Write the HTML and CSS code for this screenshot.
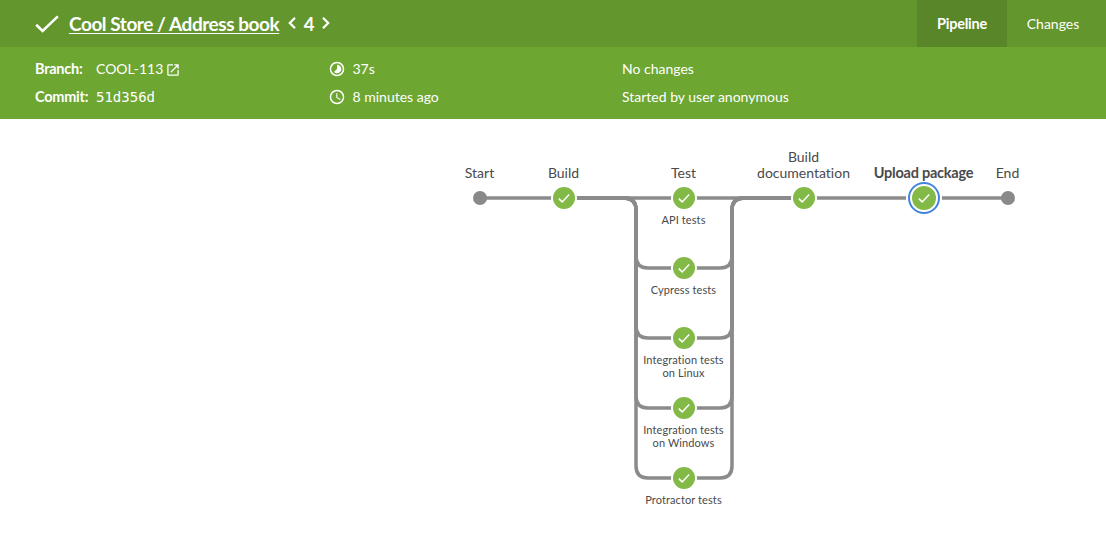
FILE: index.html
```html
<!DOCTYPE html>
<html lang="en">
<head>
<meta charset="utf-8">
<title>Cool Store / Address book 4</title>
<link rel="stylesheet" href="styles.css">
</head>
<body>
<header class="topbar">
  <svg class="status" width="24" height="18" viewBox="0 0 24 18"><path d="M1.2 9.8 7.6 16 22.800 1.4"/></svg>
  <h1 class="title"><a class="title-link" href="#">Cool Store / Address book</a></h1>
  <svg class="chevron prev" width="8" height="12" viewBox="0 0 8 12"><path d="M7 .8 1.800 6 7 11.200"/></svg>
  <span class="run">4</span>
  <svg class="chevron next" width="8" height="12" viewBox="0 0 8 12"><path d="M1 .8 6.200 6 1 11.200"/></svg>
  <nav class="tabs">
    <a class="tab selected" href="#">Pipeline</a>
    <a class="tab changes" href="#">Changes</a>
  </nav>
</header>
<section class="details">
  <div class="col refs">
    <div class="row"><b class="label">Branch:</b><span class="branch">COOL-113</span>
      <svg class="open" width="14" height="14" viewBox="1 1 22 22"><path d="M19 19H5V5h7V3H5a2 2 0 0 0-2 2v14a2 2 0 0 0 2 2h14c1.100 0 2-.9 2-2v-7h-2v7zM14 3v2h3.600l-9.800 9.800 1.400 1.400L19 6.400V10h2V3h-7z"/></svg></div>
    <div class="row"><b class="label">Commit:</b><span class="commit">51d356d</span></div>
  </div>
  <div class="col times">
    <div class="row"><svg class="icon" width="16" height="16" viewBox="1 1 22 22"><path d="M16.240 7.760A5.970 5.970 0 0 0 12 6v6l-4.240 4.240c2.340 2.340 6.140 2.340 8.490 0a5.990 5.990 0 0 0-.010-8.480zM12 2a10 10 0 1 0 0 20 10 10 0 0 0 0-20zm0 18a8 8 0 1 1 0-16 8 8 0 0 1 0 16z"/></svg><span>37s</span></div>
    <div class="row"><svg class="icon" width="16" height="16" viewBox="1 1 22 22"><path d="M12 2a10 10 0 1 0 0 20 10 10 0 0 0 0-20zm0 18a8 8 0 1 1 0-16 8 8 0 0 1 0 16zm.500-13H11v6l5.250 3.150.750-1.230-4.500-2.670z"/></svg><span>8 minutes ago</span></div>
  </div>
  <div class="col causes">
    <div class="row">No changes</div>
    <div class="row">Started by user anonymous</div>
  </div>
</section>
<main>
<svg class="graph" width="1106" height="424" viewBox="0 119 1106 424">
  <defs>
    <g id="node"><circle class="halo" r="13"/><circle class="success" r="11"/><path class="tick" d="M-5.200 .6-1.800 3.900 5.200-3.500"/></g>
  </defs>
  <g class="links">
    <path d="M480 198H1008"/>
    <path d="M564 198H624Q636 198 636 210V256Q636 268 648 268H720Q732 268 732 256V210Q732 198 744 198H804"/>
    <path d="M564 198H624Q636 198 636 210V326Q636 338 648 338H720Q732 338 732 326V210Q732 198 744 198H804"/>
    <path d="M564 198H624Q636 198 636 210V396Q636 408 648 408H720Q732 408 732 396V210Q732 198 744 198H804"/>
    <path d="M564 198H624Q636 198 636 210V466Q636 478 648 478H720Q732 478 732 466V210Q732 198 744 198H804"/>
  </g>
  <circle class="end" cx="480" cy="198" r="7"/>
  <circle class="end" cx="1008" cy="198" r="7"/>
  <use href="#node" x="564" y="198"/>
  <use href="#node" x="684" y="198"/>
  <use href="#node" x="684" y="268"/>
  <use href="#node" x="684" y="338"/>
  <use href="#node" x="684" y="408"/>
  <use href="#node" x="684" y="478"/>
  <use href="#node" x="804" y="198"/>
  <circle class="halo" cx="924" cy="198" r="18"/>
  <circle class="ring" cx="924" cy="198" r="15"/>
  <circle class="success" cx="924" cy="198" r="12"/>
  <path class="tick" d="M918.800 198.600 922.200 201.900 929.200 194.500"/>
  <g class="stage">
    <text x="479.500" y="178">Start</text>
    <text x="563.500" y="178">Build</text>
    <text x="683.500" y="178">Test</text>
    <text x="803.500" y="162">Build</text>
    <text x="803.500" y="178">documentation</text>
    <text class="current" x="923.500" y="178">Upload package</text>
    <text x="1007.500" y="178">End</text>
  </g>
  <g class="branch-name">
    <text x="683.500" y="224">API tests</text>
    <text x="683.500" y="294">Cypress tests</text>
    <text x="683.500" y="364">Integration tests</text>
    <text x="683.500" y="377">on Linux</text>
    <text x="683.500" y="434">Integration tests</text>
    <text x="683.500" y="447">on Windows</text>
    <text x="683.500" y="504">Protractor tests</text>
  </g>
</svg>
</main>
</body>
</html>
```

FILE: styles.css
```css
* { box-sizing: border-box; }
body { margin: 0; background: #fff; font-family: Lato, sans-serif; font-size: 14px; font-variant-ligatures: none; color: #4a4a4a; overflow: hidden; }
a { color: inherit; text-decoration: none; }
.topbar { display: flex; align-items: center; height: 47px; padding-left: 35px; background: #63962d; color: #fff; }
.status { margin-right: 10px; }
.status path { fill: none; stroke: #fff; stroke-width: 2.6; }
.title { margin: 0; font-size: 19px; letter-spacing: -.45px; line-height: 24px; font-weight: 700; white-space: nowrap; }
.title-link { text-decoration: underline; text-decoration-thickness: 1px; text-underline-offset: 2px; }
.chevron { margin-top: -2px; }
.chevron path { fill: none; stroke: #fff; stroke-width: 2.2; }
.prev { margin-left: 8.5px; }
.run { margin: 0 8px; font-size: 18.5px; line-height: 24px; font-weight: 700; }
.tabs { display: flex; align-self: stretch; margin-left: auto; }
.tab { display: flex; align-items: center; justify-content: center; width: 90px; padding-bottom: 1px; }
.changes { width: 99px; padding-right: 7px; }
.selected { background: #598628; font-size: 14.5px; letter-spacing: -.24px; font-weight: 700; }
.details { display: flex; height: 72px; padding: 8px 0 0 35px; background: #6da631; color: #fff; }
.row { display: flex; align-items: center; height: 28px; padding-bottom: 1px; white-space: nowrap; }
.refs { width: 294px; }
.times { width: 293px; }
.label { width: 61px; font-size: 14.5px; letter-spacing: -.24px; }
.commit { margin-top: 1px; font-family: "DejaVu Sans Mono", monospace; font-size: 14px; }
.open { margin: 2px 0 0 3px; fill: #fff; }
.icon { margin: 1px 7.5px 0 0; fill: #fff; }
.graph { display: block; }
.links { fill: none; stroke: #8c8b8b; stroke-width: 3.5; }
.end { fill: #8a8989; }
.halo { fill: #fff; }
.success { fill: #83b946; }
.ring { fill: #fff; stroke: #4384e0; stroke-width: 2; }
.tick { fill: none; stroke: #fff; stroke-width: 1.5; }
.stage { font-size: 14px; text-anchor: middle; fill: #4a4a4a; }
.current { font-size: 14.5px; letter-spacing: -.24px; font-weight: 700; }
.branch-name { font-size: 11px; letter-spacing: .1px; text-anchor: middle; fill: #4a4a4a; }
```
